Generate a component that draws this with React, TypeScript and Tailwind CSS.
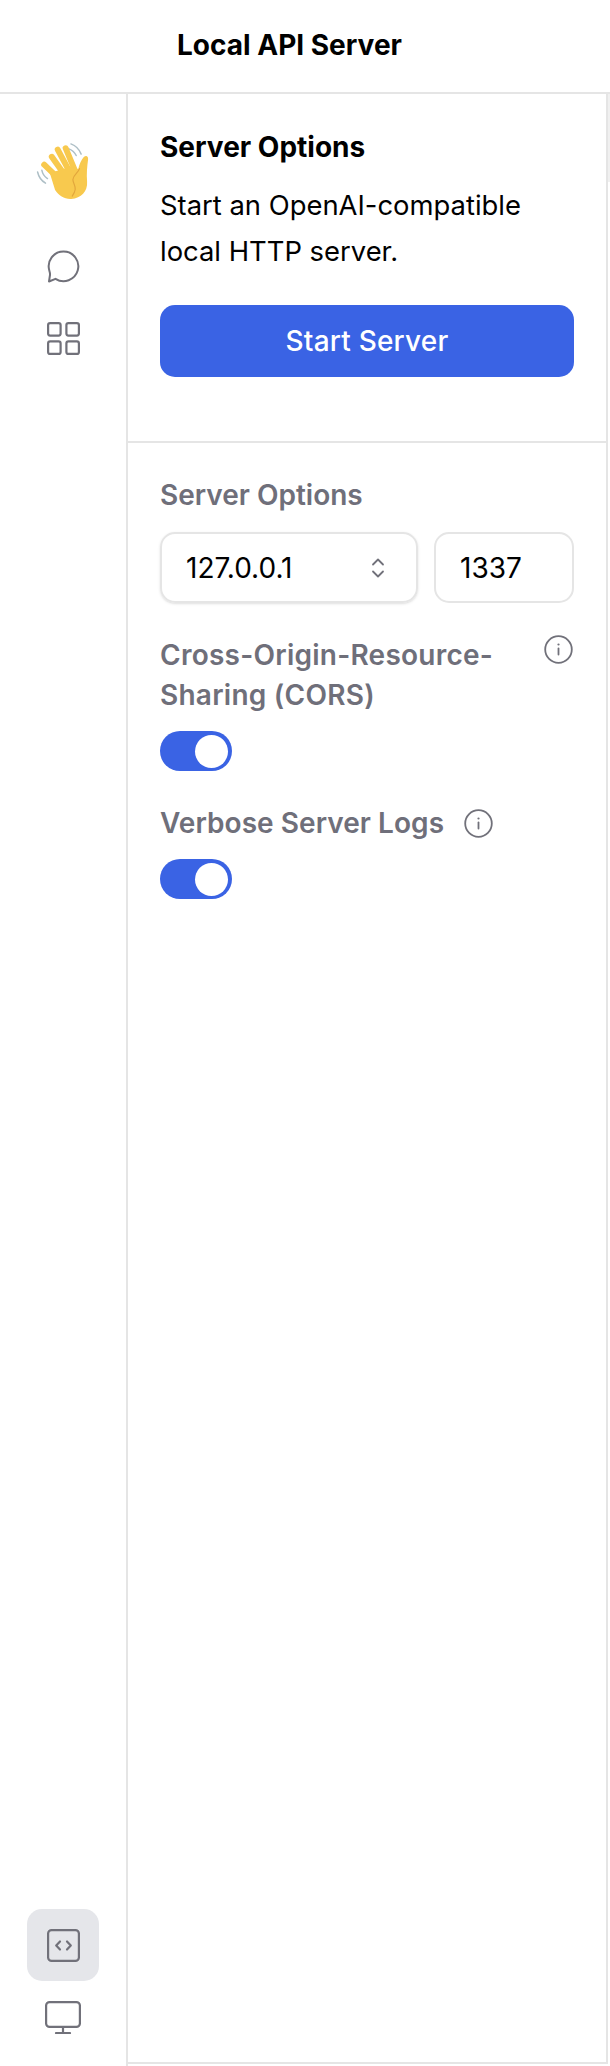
import React from "react";

const iconStroke = "#71717a";

function Wave() {
  return (
    <svg width="66" height="64" viewBox="0 0 200 192" fill="none" aria-hidden="true">
      <path d="M124 20c14 5 25 16 31 31M118 35c10 4 17 10 22 20" stroke="#aebfc6" strokeWidth="4.500" strokeLinecap="round" />
      <path d="M23 105c3 14 11 26 24 34M36 100c2 10 8 19 17 25" stroke="#aebfc6" strokeWidth="4.500" strokeLinecap="round" />
      <g stroke="#f8c94e" strokeWidth="18" strokeLinecap="round">
        <path d="M43 83L92 130" />
        <path d="M66 59L108 118" />
        <path d="M84 37L122 108" />
        <path d="M108 33L136 100" />
      </g>
      <path
        d="M60 108L128 88L146 97C150 80 156 68 163 60C170 53 177 57 176 67C173 90 171 110 173 135C175 165 155 185 125 187C104 188 88 178 76 160Z"
        fill="#f8c94e"
      />
      <path d="M150 95C146 108 131 113 130 128C130 138 138 146 137 158C136 166 132 172 128 178" stroke="#e2a63c" strokeWidth="3.500" strokeLinecap="round" />
    </svg>
  );
}

function Chat() {
  return (
    <svg width="33" height="33" viewBox="0 0 33 33" fill="none" stroke={iconStroke} strokeWidth="2" strokeLinejoin="round" aria-hidden="true">
      <path d="M2 31.500l6.500-2.700a14.800 14.800 0 1 0-6.200-8.300c.6 2 .9 3 .7 4.500z" />
    </svg>
  );
}

function Grid() {
  return (
    <svg width="33" height="33" viewBox="0 0 33 33" fill="none" stroke={iconStroke} strokeWidth="2.200" aria-hidden="true">
      <rect x="1.100" y="1.100" width="12.500" height="12.500" rx="2" />
      <rect x="19.400" y="1.100" width="12.500" height="12.500" rx="2" />
      <rect x="1.100" y="19.400" width="12.500" height="12.500" rx="2" />
      <rect x="19.400" y="19.400" width="12.500" height="12.500" rx="2" />
    </svg>
  );
}

function Code() {
  return (
    <svg width="33" height="33" viewBox="0 0 33 33" fill="none" stroke={iconStroke} strokeWidth="2.200" strokeLinejoin="round" aria-hidden="true">
      <rect x="1.100" y="1.100" width="30.800" height="30.800" rx="3.500" />
      <path d="M13 12.500l-3.800 4 3.800 4M20 12.500l3.800 4-3.800 4" strokeLinecap="round" />
    </svg>
  );
}

function Monitor() {
  return (
    <svg width="36" height="33" viewBox="0 0 36 33" fill="none" stroke={iconStroke} strokeWidth="2.200" strokeLinecap="round" aria-hidden="true">
      <rect x="1.100" y="1.100" width="33.800" height="24.800" rx="3.500" />
      <path d="M18 26v6M11 32h14" />
    </svg>
  );
}

function Info() {
  return (
    <svg width="29" height="29" viewBox="0 0 29 29" fill="none" stroke={iconStroke} strokeWidth="1.800" strokeLinecap="round" aria-hidden="true">
      <circle cx="14.500" cy="14.500" r="13.300" />
      <path d="M14.500 13.500v6" />
      <path d="M14.500 9.500h.01" strokeWidth="2.200" />
    </svg>
  );
}

function Chevrons() {
  return (
    <svg width="14" height="22" viewBox="0 0 14 22" fill="none" stroke="#71717a" strokeWidth="1.800" strokeLinecap="round" strokeLinejoin="round" aria-hidden="true">
      <path d="M2 7.500L7 2.500l5 5M2 14.500l5 5 5-5" />
    </svg>
  );
}

function Toggle() {
  return (
    <div className="flex h-[40px] w-[72px] items-center justify-end rounded-full bg-[#3a63e4] pr-[4px]">
      <div className="h-[33px] w-[33px] rounded-full bg-white" />
    </div>
  );
}

export default function App() {
  return (
    <div className="relative flex h-[2066px] w-[610px] flex-col bg-white text-black [font-family:Inter,'Liberation_Sans',sans-serif]">
      <header className="flex h-[94px] shrink-0 items-center border-b-2 border-[#e5e5e5] pb-[2px] pl-[177px]">
        <h1 className="text-[28px] leading-[40px] font-[650]">Local API Server</h1>
      </header>
      <div className="flex min-h-0 flex-1">
        <aside className="flex w-[128px] shrink-0 flex-col items-center border-r-2 border-[#e5e5e5] pb-[32px]">
          <div className="mt-[43px]">
            <Wave />
          </div>
          <div className="mt-[49px]">
            <Chat />
          </div>
          <div className="mt-[39px]">
            <Grid />
          </div>
          <div className="mt-auto flex h-[72px] w-[72px] items-center justify-center rounded-[15px] bg-[#e5e6ea]">
            <Code />
          </div>
          <div className="mt-[20px]">
            <Monitor />
          </div>
        </aside>
        <main className="mb-[2px] flex w-[480px] flex-col border-r-2 border-b-2 border-[#e5e5e5]">
          <section className="border-b-2 border-[#e5e5e5] pt-[33px] pr-[32px] pb-[64px] pl-[32px]">
            <h2 className="text-[28px] leading-[40px] font-[650]">Server Options</h2>
            <p className="mt-[15px] text-[27.400px] leading-[46px]">Start an OpenAI-compatible local HTTP server.</p>
            <button className="mt-[31px] h-[72px] w-full rounded-[15px] bg-[#3a63e4] text-[28px] font-medium tracking-[0.2px] text-white">Start Server</button>
          </section>
          <section className="pt-[32px] pr-[32px] pl-[32px]">
            <h3 className="text-[28px] leading-[40px] font-semibold text-[#6f6f7a]">Server Options</h3>
            <div className="mt-[17px] flex gap-[16px]">
              <div className="flex h-[71px] w-[258px] items-center justify-between rounded-[15px] border-2 border-[#e5e5e5] pr-[31px] pl-[24px] text-[28px] shadow-sm">
                <span>127.0.0.1</span>
                <Chevrons />
              </div>
              <div className="flex h-[71px] w-[140px] items-center rounded-[15px] border-2 border-[#e5e5e5] pl-[24px] text-[28px]">1337</div>
            </div>
            <div className="mt-[32px] flex items-start justify-between pr-[1px]">
              <span className="w-[340px] text-[28px] leading-[40px] font-semibold tracking-[0.25px] text-[#6f6f7a]">Cross-Origin-Resource-Sharing (CORS)</span>
              <div>
                <Info />
              </div>
            </div>
            <div className="mt-[16px]">
              <Toggle />
            </div>
            <div className="mt-[32px] flex items-center gap-[20px]">
              <span className="text-[28px] leading-[40px] font-semibold tracking-[0.05px] text-[#6f6f7a]">Verbose Server Logs</span>
              <Info />
            </div>
            <div className="mt-[16px]">
              <Toggle />
            </div>
          </section>
        </main>
      </div>
      <div className="absolute top-[94px] right-0 h-[88px] w-[2px] bg-[#f0f0f0]" />
    </div>
  );
}
